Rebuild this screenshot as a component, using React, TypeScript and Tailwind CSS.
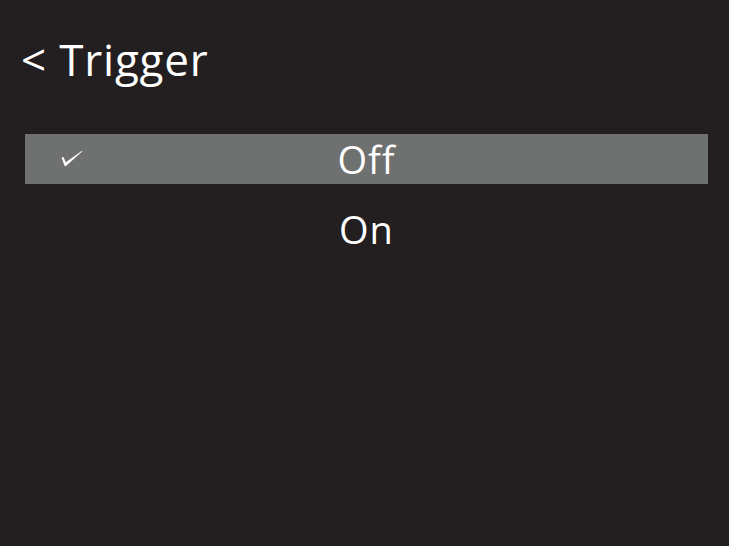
import { Fragment } from 'react'

const OPTIONS = [
  { label: 'Off', selected: true },
  { label: 'On', selected: false },
]

export default function App() {
  return (
    <div
      className="w-[729px] h-[546px] bg-[#231f20] text-white overflow-hidden"
      style={{ fontFamily: '"Open Sans", "Noto Sans", sans-serif' }}
    >
      <div className="pl-[21px] pt-[31px] text-[44px] leading-[56px] tracking-[0.8px]">&lt; Trigger</div>

      <div className="mt-[47px] ml-[25px] w-[683px] flex flex-col gap-[20px]">
        {OPTIONS.map(opt => (
          <Fragment key={opt.label}>
            <div
              className={
                'relative h-[50px] flex items-center justify-center text-[38px] tracking-[1px] ' +
                (opt.selected ? 'bg-[#6f7070]' : '')
              }
            >
              {opt.selected && (
                <svg
                  className="absolute left-[36px] top-[16px]"
                  width="22"
                  height="17"
                  viewBox="0 0 22 17"
                  fill="none"
                >
                  {/* tapered tick, heavier at the base */}
                  <path
                    d="M0.5 7.5 L2.5 7 L4.8 12.2 L21 0.8 L21.4 1.3 L5 16 L3.6 16 Z"
                    fill="white"
                  />
                </svg>
              )}
              <span className="leading-none">{opt.label}</span>
            </div>
          </Fragment>
        ))}
      </div>
    </div>
  )
}
